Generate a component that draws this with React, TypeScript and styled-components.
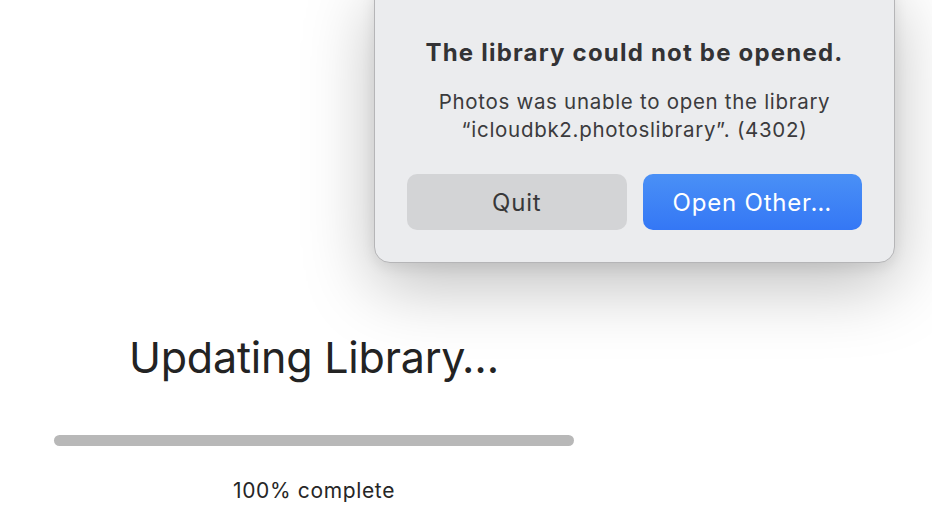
import React from 'react';
import styled, { createGlobalStyle } from 'styled-components';

const GlobalStyle = createGlobalStyle`
  html, body {
    margin: 0;
    padding: 0;
    background: #ffffff;
  }
  * {
    box-sizing: border-box;
  }
`;

const Page = styled.div`
  position: relative;
  width: 932px;
  height: 512px;
  overflow: hidden;
  background: #ffffff;
  font-family: Inter, "Noto Sans", "Liberation Sans", sans-serif;
`;

const Progress = styled.div`
  display: flex;
  flex-direction: column;
  align-items: center;
  width: 520px;
  margin-left: 54px;
  padding-top: 327px;
`;

const Heading = styled.h1`
  margin: 0;
  font-size: 43px;
  line-height: 60px;
  font-weight: 400;
  color: #232323;
  letter-spacing: -0.2px;
`;

const Track = styled.div`
  width: 100%;
  height: 11px;
  margin-top: 48px;
  border-radius: 6px;
  background: #b8b8b8;
`;

const Caption = styled.div`
  margin-top: 32px;
  font-size: 21px;
  line-height: 26px;
  color: #262626;
  letter-spacing: 0.65px;
`;

const Sheet = styled.div`
  position: absolute;
  top: -19px;
  left: 374px;
  width: 521px;
  padding: 57px 32px 32px;
  background: #ebecee;
  border: 1px solid #b5b5b7;
  border-radius: 16px;
  box-shadow: 0 22px 70px rgba(0, 0, 0, 0.26), 0 4px 14px rgba(0, 0, 0, 0.08);
  display: flex;
  flex-direction: column;
  align-items: center;
  text-align: center;
`;

const Title = styled.div`
  font-size: 24px;
  line-height: 28px;
  font-weight: 700;
  color: #333335;
  letter-spacing: 1.2px;
`;

const Message = styled.div`
  margin-top: 21px;
  font-size: 20.5px;
  line-height: 28px;
  color: #3b3b3d;
  letter-spacing: 0.7px;
`;

const Buttons = styled.div`
  display: flex;
  gap: 16px;
  width: 100%;
  margin-top: 30px;
`;

const Button = styled.button<{ $primary?: boolean }>`
  flex: 1;
  height: 56px;
  border: none;
  border-radius: 10px;
  font-family: inherit;
  font-size: 24px;
  font-weight: 400;
  letter-spacing: 0.8px;
  color: ${p => (p.$primary ? '#ffffff' : '#383839')};
  background: ${p =>
    p.$primary ? 'linear-gradient(180deg, #4a90f6 0%, #3477f5 100%)' : '#d3d4d6'};
`;

export default function App() {
  return (
    <>
      <GlobalStyle />
      <Page>
        <Progress>
          <Heading>Updating Library…</Heading>
          <Track />
          <Caption>100% complete</Caption>
        </Progress>
        <Sheet>
          <Title>The library could not be opened.</Title>
          <Message>
            Photos was unable to open the library
            <br />
            “icloudbk2.photoslibrary”. (4302)
          </Message>
          <Buttons>
            <Button>Quit</Button>
            <Button $primary>Open Other…</Button>
          </Buttons>
        </Sheet>
      </Page>
    </>
  );
}
